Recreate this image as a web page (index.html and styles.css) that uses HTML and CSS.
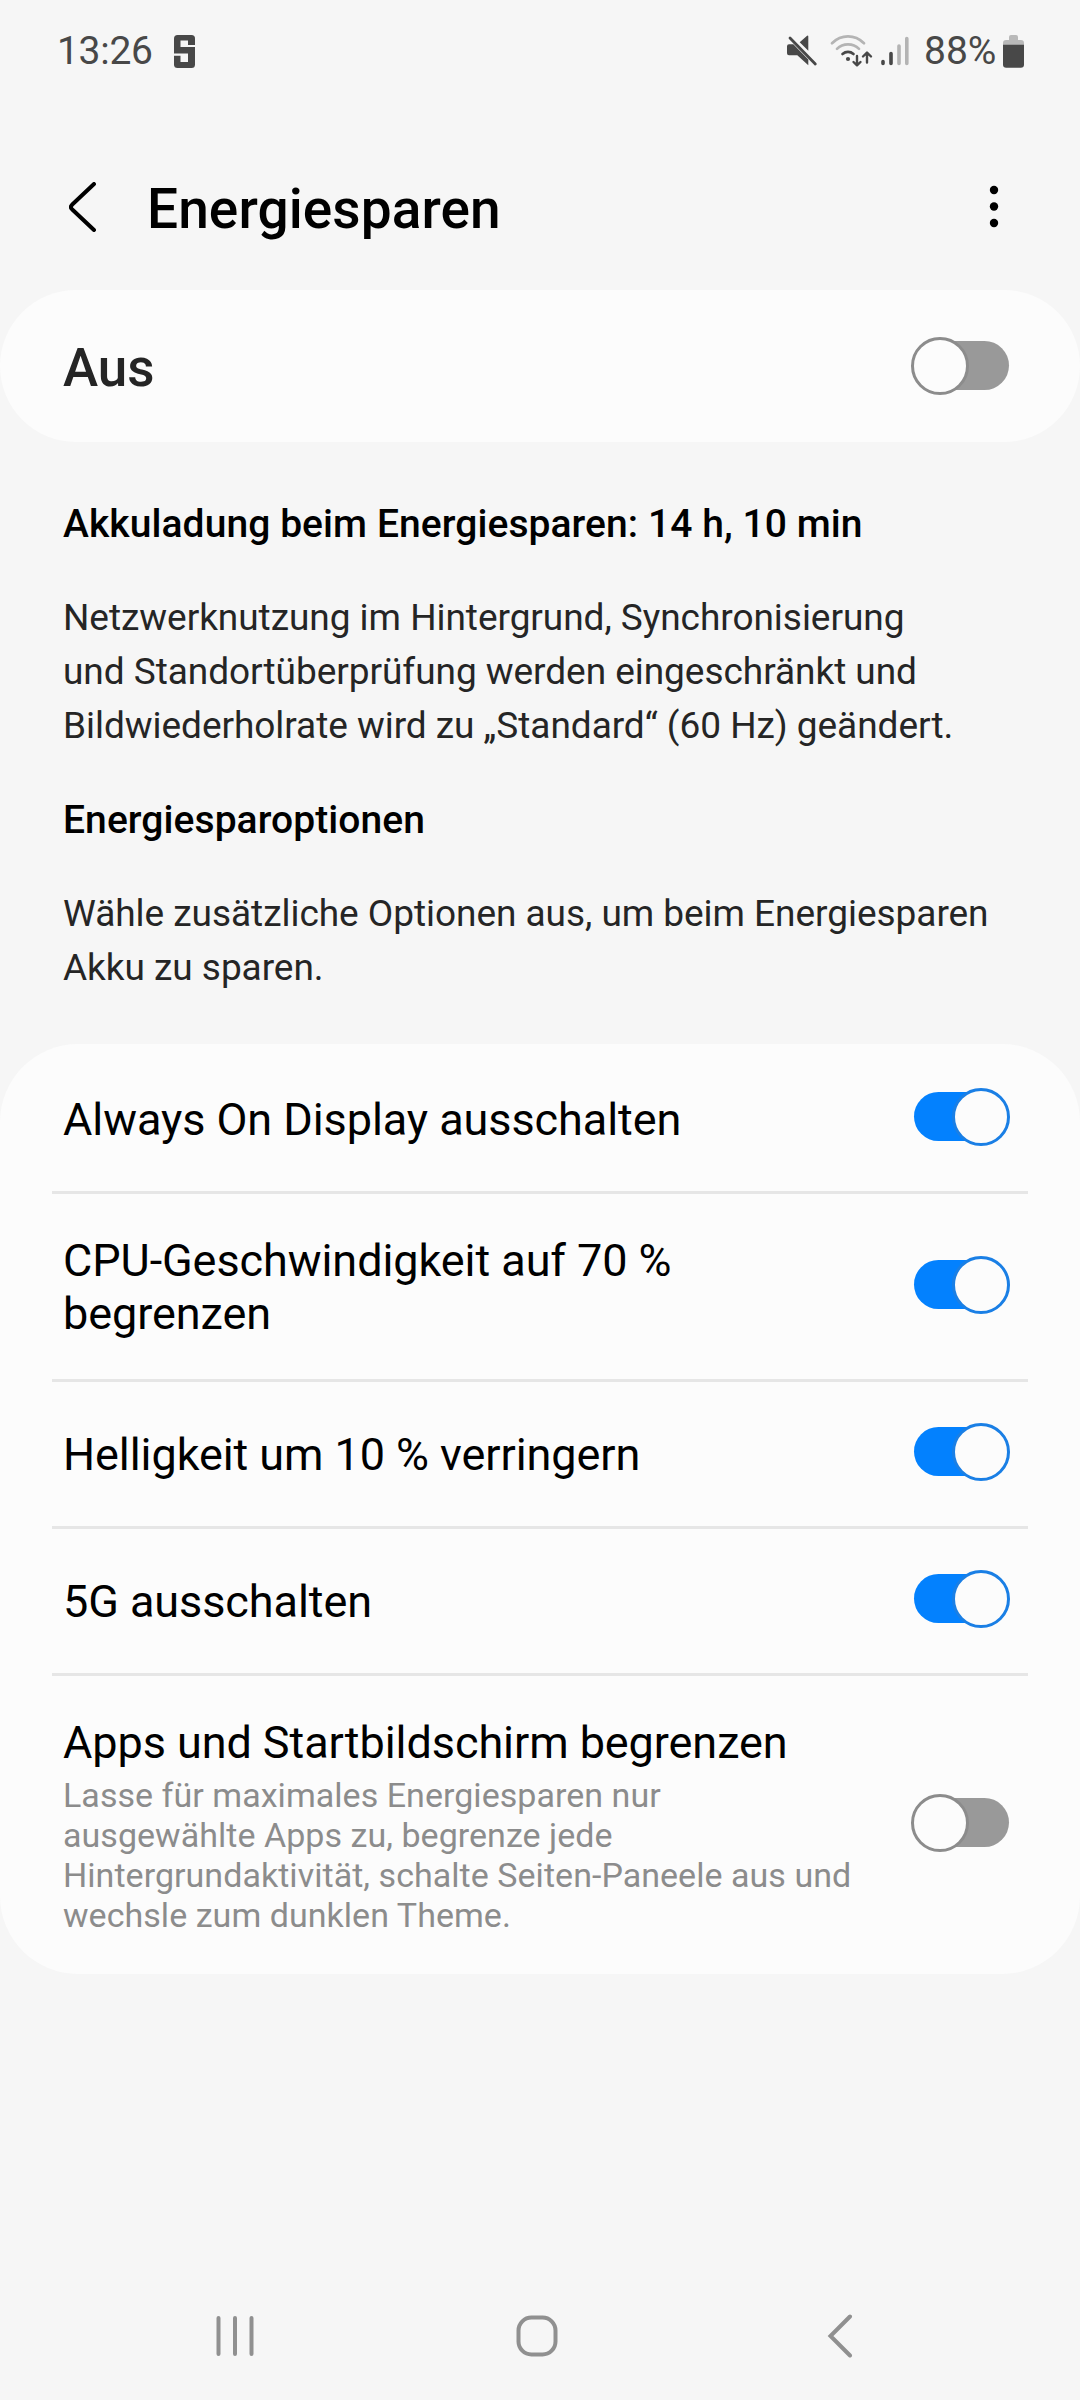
FILE: index.html
```html
<!DOCTYPE html>
<html lang="de">
<head>
  <meta charset="UTF-8">
  <meta name="viewport" content="width=device-width, initial-scale=1.0">
  <title>Energiesparen</title>
  <link rel="stylesheet" href="styles.css">
</head>
<body>
  <div class="status-bar">
    <div class="status-left">
      <span class="status-time">13:26</span>
      <svg class="status-app" width="21" height="33" viewBox="0 0 21 33">
        <rect width="21" height="33" rx="3.5" fill="#484848"/>
        <path d="M6.5 5.5H14V10H21V12H6.5ZM14 27V18.500H0V20.800H6.500V27Z" fill="#f6f6f6"/>
      </svg>
    </div>
    <div class="status-right">
      <svg class="icon-mute" width="32" height="34" viewBox="0 0 32 34">
        <path d="M3 10.3H7.3L22.3 25.5V31.3L11.3 21.3H3Q1 21.3 1 19.3V12.3Q1 10.3 3 10.3ZM13.7 8.2L20.8 2Q22.3 1 22.3 2.5V16.7Z" fill="#484848"/>
        <path d="M4 4L29.3 30" stroke="#484848" stroke-width="2.8" stroke-linecap="round"/>
      </svg>
      <svg class="icon-wifi" width="43" height="34" viewBox="0 0 43 34" fill="none" stroke-width="2.7" stroke-linecap="round" stroke-linejoin="round">
        <path d="M2 9.2Q9 2.4 18 2.4T34 9.2M7 14.9Q11.5 10.4 18 10.4T29 14.9" stroke="#b4b4b4"/>
        <path d="M12.5 20Q15 17.9 18 17.9T23.5 20" stroke="#484848"/>
        <circle cx="18" cy="25" r="2.1" fill="#484848"/>
        <path d="M27 22V31M23.5 28L27 31.3L30.5 28M37 28.5V18.6M33 22.5L37 18.5L41 22.5" stroke="#484848" stroke-width="2.4"/>
      </svg>
      <svg class="icon-signal" width="28" height="30" viewBox="0 0 28 30" stroke-width="3.6" stroke-linecap="round">
        <path d="M2 25.5V27.5M10 17.5V27.5" stroke="#484848"/>
        <path d="M18 10V27.5M25.8 2.5V27.5" stroke="#b4b4b4"/>
      </svg>
      <span class="status-percent">88%</span>
      <svg class="icon-battery" width="21" height="33" viewBox="0 0 21 33">
        <path d="M6 5V2Q6 0 8 0H13Q15 0 15 2V5H18Q21 5 21 8V10H0V8Q0 5 3 5Z" fill="#b9b9b9"/>
        <path d="M0 9.7H21V29.5Q21 32.7 17.8 32.7H3.2Q0 32.7 0 29.5Z" fill="#484848"/>
      </svg>
    </div>
  </div>

  <header>
    <svg class="back" width="28" height="50" viewBox="0 0 28 50" fill="none">
      <path d="M25 2L3 22.8Q0.8 25 3 27.2L25 48" stroke="#000" stroke-width="4" stroke-linecap="round" stroke-linejoin="round"/>
    </svg>
    <h1>Energiesparen</h1>
    <svg class="more" width="10" height="44" viewBox="0 0 10 44">
      <circle cx="5" cy="5" r="4.2"/>
      <circle cx="5" cy="21.5" r="4.2"/>
      <circle cx="5" cy="38" r="4.2"/>
    </svg>
  </header>

  <div class="card main-switch">
    <div class="main-label">Aus</div>
    <div class="toggle"></div>
  </div>

  <div class="info">
    <h2>Akkuladung beim Energiesparen: 14 h, 10 min</h2>
    <p>Netzwerknutzung im Hintergrund, Synchronisierung<br>und Standortüberprüfung werden eingeschränkt und<br>Bildwiederholrate wird zu „Standard“ (60 Hz) geändert.</p>
    <h2>Energiesparoptionen</h2>
    <p>Wähle zusätzliche Optionen aus, um beim Energiesparen<br>Akku zu sparen.</p>
  </div>

  <div class="card options">
    <div class="row">
      <div class="row-text">
        <div class="row-title">Always On Display ausschalten</div>
      </div>
      <div class="toggle on"></div>
    </div>
    <div class="row">
      <div class="row-text">
        <div class="row-title">CPU-Geschwindigkeit auf 70 %<br>begrenzen</div>
      </div>
      <div class="toggle on"></div>
    </div>
    <div class="row">
      <div class="row-text">
        <div class="row-title">Helligkeit um 10 % verringern</div>
      </div>
      <div class="toggle on"></div>
    </div>
    <div class="row">
      <div class="row-text">
        <div class="row-title">5G ausschalten</div>
      </div>
      <div class="toggle on"></div>
    </div>
    <div class="row">
      <div class="row-text">
        <div class="row-title">Apps und Startbildschirm begrenzen</div>
        <div class="row-desc">Lasse für maximales Energiesparen nur<br>ausgewählte Apps zu, begrenze jede<br>Hintergrundaktivität, schalte Seiten-Paneele aus und<br>wechsle zum dunklen Theme.</div>
      </div>
      <div class="toggle"></div>
    </div>
  </div>

  <nav class="nav-bar">
    <svg width="40" height="44" viewBox="0 0 40 44" fill="none" stroke="#909090" stroke-width="4" stroke-linecap="round">
      <path d="M3.5 4V40M20 4V40M36.5 4V40"/>
    </svg>
    <svg class="nav-home" width="42" height="44" viewBox="0 0 42 44" fill="none" stroke="#909090" stroke-width="4">
      <rect x="2.5" y="3.5" width="37" height="37" rx="13"/>
    </svg>
    <svg width="26" height="44" viewBox="0 0 26 44" fill="none" stroke="#909090" stroke-width="4" stroke-linecap="round">
      <path d="M23 2.5L3.5 22L23 41.5"/>
    </svg>
  </nav>
</body>
</html>
```

FILE: styles.css
```css
:root {
  --bg: #f6f6f6;
  --card: #fcfcfc;
  --blue: #0381fe;
  --grey: #999999;
  --line: #e6e6e6;
  --status: #484848;
}

* {
  box-sizing: border-box;
}

body {
  margin: 0;
  height: 2400px;
  display: flex;
  flex-direction: column;
  background-color: var(--bg);
  color: #000;
  font-family: Roboto, sans-serif;
}

h1, h2, p {
  margin: 0;
}

svg {
  display: block;
  flex-shrink: 0;
}

.status-bar {
  height: 102px;
  padding: 0 56px 0 57px;
  display: flex;
  justify-content: space-between;
  align-items: center;
  color: var(--status);
  font-size: 39px;
  line-height: 46px;
}

.status-left,
.status-right {
  display: flex;
  align-items: center;
}

.status-time {
  width: 117px;
  letter-spacing: -0.3px;
}

.icon-mute {
  margin-right: 12px;
}

.icon-wifi {
  margin-right: 8px;
}

.icon-signal {
  margin-right: 15px;
}

.status-percent {
  width: 79px;
}

header {
  height: 188px;
  padding: 21px 81px 0 69px;
  display: flex;
  align-items: center;
}

header h1 {
  flex: 1;
  margin-left: 50px;
  padding-top: 5px;
  font-size: 55px;
  line-height: 64px;
  font-weight: 500;
  letter-spacing: 0.08px;
}

.card {
  background-color: var(--card);
  border-radius: 78px;
}

.main-switch {
  height: 152px;
  padding: 0 71px 0 63px;
  display: flex;
  justify-content: space-between;
  align-items: center;
}

.main-label {
  padding-top: 4px;
  color: #252525;
  font-size: 53px;
  line-height: 62px;
  font-weight: 500;
}

.info {
  padding: 59px 0 49px 63px;
  display: flex;
  flex-direction: column;
  gap: 44px;
}

.info h2 {
  font-size: 39px;
  line-height: 46px;
  font-weight: 500;
  letter-spacing: 0.07px;
}

.info p {
  color: #252525;
  font-size: 37px;
  line-height: 54px;
  letter-spacing: -0.04px;
}

.row {
  min-height: 147px;
  margin: 0 52px;
  padding: 0 19px 0 11px;
  display: flex;
  justify-content: space-between;
  align-items: center;
  background: linear-gradient(var(--line), var(--line)) top / 100% 3px no-repeat;
}

.row:first-child {
  background: none;
}

.row:nth-child(2) {
  height: 188px;
}

.row:last-child {
  height: 301px;
}

.row-text {
  padding-top: 4px;
}

.row-title {
  font-size: 45px;
  line-height: 53px;
  letter-spacing: -0.07px;
}

.row-desc {
  margin-top: 6px;
  color: #8c8c8c;
  font-size: 34px;
  line-height: 40px;
  letter-spacing: 0.04px;
}

/* knob is wider than the track and overlaps it */
.toggle {
  position: relative;
  flex-shrink: 0;
  width: 95px;
  height: 49px;
  margin-bottom: 2px;
  border-radius: 25px;
  background-color: var(--grey);
}

.toggle::after {
  content: "";
  position: absolute;
  box-sizing: border-box;
  top: -4px;
  left: -3px;
  width: 58px;
  height: 58px;
  border: 3px solid #8c8c8c;
  border-radius: 50%;
  background-color: #fcfcfc;
}

.toggle.on {
  background-color: var(--blue);
}

.toggle.on::after {
  left: 38px;
  border-color: #1a7fe5;
}

.nav-bar {
  height: 128px;
  margin-top: auto;
  padding: 0 227px 0 215px;
  display: flex;
  justify-content: space-between;
  align-items: center;
}

.nav-home {
  margin-right: 8px;
}
```
